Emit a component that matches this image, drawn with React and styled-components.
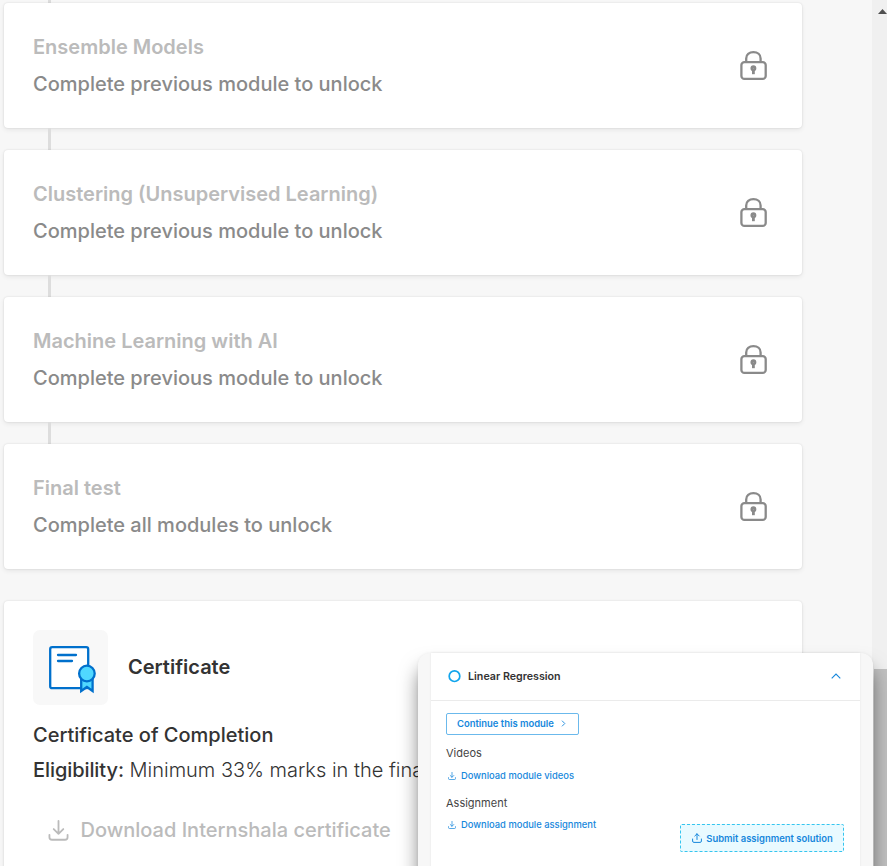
import React from "react";
import styled, { createGlobalStyle } from "styled-components";

const GlobalStyle = createGlobalStyle`
  * { box-sizing: border-box; }
  html, body { margin: 0; background: #f7f7f7; overflow: hidden; }
  body { font-family: Inter, "Open Sans", sans-serif; }
  svg { display: block; flex: none; }
  h2, h3, p { margin: 0; }
`;

const Page = styled.div`
  position: relative;
  display: flex;
  width: 887px;
  height: 866px;
  overflow: hidden;
  background: #f7f7f7;
`;

const Content = styled.main`
  width: 872px;
  padding-left: 4px;
`;

const Scrollbar = styled.div`
  display: flex;
  flex-direction: column;
  width: 15px;
  height: 866px;
  background: #f0f0f0;
`;

const ScrollArrow = styled.div`
  height: 669px;
  flex: none;
  padding: 9px 0 0 6px;
`;

const ScrollThumb = styled.div`
  flex: 1;
  margin-left: 2px;
  background: #c1c1c1;
`;

const Connector = styled.div`
  width: 3px;
  height: ${({ $height }) => $height}px;
  margin-left: 44px;
  background: #dddddd;
`;

const Card = styled.section`
  width: 798px;
  background: #fff;
  border-radius: 4px;
  box-shadow: 0 0 2px rgba(0, 0, 0, 0.12), 0 2px 5px rgba(0, 0, 0, 0.07);
`;

const ModuleCard = styled(Card)`
  display: flex;
  align-items: center;
  justify-content: space-between;
  height: 125px;
  padding: 0 34px 0 29px;
`;

const ModuleTitle = styled.h3`
  color: #bbb;
  font-size: 20px;
  font-weight: 600;
  line-height: 28px;
`;

const ModuleNote = styled.p`
  margin-top: 9px;
  color: #8a8a8a;
  font-size: 20px;
  font-weight: 500;
  line-height: 28px;
  white-space: nowrap;
`;

const CertificateCard = styled(Card)`
  height: 300px;
  margin-top: 32px;
  padding: 29px;
`;

const CertificateHeader = styled.div`
  display: flex;
  align-items: center;
  gap: 20px;
`;

const CertificateIconBox = styled.div`
  width: 75px;
  height: 75px;
  border-radius: 7px;
  background: #f8f8f8;
`;

const CertificateTitle = styled.h2`
  padding-bottom: 2px;
  color: #333;
  font-size: 20px;
  font-weight: 600;
  line-height: 28px;
`;

const CertificateText = styled.p`
  margin-top: ${({ $gap }) => $gap}px;
  color: #333;
  font-size: 20px;
  font-weight: ${({ $weight }) => $weight};
  line-height: 28px;
  white-space: nowrap;
`;

const Strong = styled.span`
  font-weight: 500;
  letter-spacing: -0.08px;
`;

const DisabledDownload = styled.div`
  display: flex;
  align-items: center;
  gap: 12px;
  margin: 32px 0 0 14.5px;
  color: #bbb;
  font-size: 20px;
  font-weight: 500;
  line-height: 28px;
`;

const Popup = styled.aside`
  position: absolute;
  left: 418px;
  top: 653px;
  width: 455px;
  height: 270px;
  padding: 0 13px;
  border-radius: 12px;
  background: #f7f7f7;
  box-shadow: 0 14px 20px -2px rgba(0, 0, 0, 0.55), 0 0 3px rgba(0, 0, 0, 0.06);
`;

const PopupPanel = styled.div`
  height: 270px;
  background: #fff;
  box-shadow: 0 0 2px rgba(0, 0, 0, 0.08);
`;

const PopupHeader = styled.header`
  display: flex;
  align-items: center;
  height: 48px;
  padding: 0 19px 1px 17px;
  border-bottom: 1px solid #ebebeb;
`;

const PopupTitle = styled.h3`
  flex: 1;
  margin-left: 7px;
  padding-top: 2px;
  color: #333;
  font-size: 10.7px;
  font-weight: 600;
  line-height: 16px;
`;

const PopupBody = styled.div`
  display: flex;
  flex-direction: column;
  align-items: flex-start;
  padding: 12px 16px 0 15px;
`;

const ContinueButton = styled.button`
  display: flex;
  align-items: center;
  gap: 7px;
  width: 133px;
  height: 22px;
  padding: 0 0 1px 10px;
  border: 1px solid #6bb9ec;
  border-radius: 2px;
  background: #fff;
  color: #1687dc;
  font: 600 9.45px Inter, sans-serif;
  white-space: nowrap;
`;

const SectionLabel = styled.p`
  margin-top: ${({ $gap }) => $gap}px;
  color: #444;
  font-size: 11px;
  line-height: 16px;
`;

const DownloadLink = styled.a`
  display: flex;
  align-items: center;
  gap: 5px;
  margin: ${({ $gap }) => $gap}px 0 0 2px;
  color: #1687dc;
  font-size: 9.4px;
  font-weight: 500;
  line-height: 14px;
`;

const SubmitButton = styled.button`
  display: flex;
  align-items: center;
  justify-content: center;
  align-self: flex-end;
  gap: 4px;
  width: 164px;
  height: 28px;
  margin-top: -8px;
  padding: 0 0 0 1px;
  border: 1px dashed #35c5ef;
  border-radius: 2px;
  background: #e9faff;
  color: #1687dc;
  font: 600 9.45px Inter, sans-serif;
  white-space: nowrap;
`;

const LockIcon = () => (
  <svg width="28" height="30" viewBox="0.3 0.6 28 30" fill="none" stroke="#8a8a8a">
    <rect x="1.7" y="11.7" width="24.3" height="16.8" rx="3" strokeWidth="2.3" />
    <path d="M6.5 11V8C6.5 4.4 9.4 1.8 13.7 1.8s7.2 2.6 7.2 6.2V11" strokeWidth="2.3" />
    <circle cx="13.7" cy="17.8" r="1.6" strokeWidth="2.7" />
    <path d="M13.7 19.5v4.3" strokeWidth="2.8" />
  </svg>
);

const CertificateIcon = () => (
  <svg width="75" height="75" viewBox="0 0 75 75" stroke="#0070cc" strokeWidth="2.3" strokeLinecap="round">
    <rect x="17.2" y="17.2" width="38" height="41" rx="2" fill="#fff" />
    <path d="M25 25h18M25 31h14" fill="none" />
    <path d="M48.2 48v13l5.7-4 5.7 4V48z" fill="#50d8ff" />
    <circle cx="53.9" cy="43.5" r="7.8" fill="#50d8ff" />
  </svg>
);

const DownloadIcon = ({ size, strokeWidth }) => (
  <svg width={size} height={size} viewBox="0 0 22 22" fill="none" stroke="currentColor" strokeWidth={strokeWidth} strokeLinecap="round" strokeLinejoin="round">
    <path d="M11 1v13.5M6 9.5l5 5 5-5M1.5 15.5V18q0 2.7 2.7 2.7h13.6q2.7 0 2.7-2.7v-2.5" />
  </svg>
);

const UploadIcon = () => (
  <svg width="10" height="10" viewBox="0 0 10 10" fill="none" stroke="currentColor" strokeLinecap="round" strokeLinejoin="round">
    <path d="M5 6.5V.8M2.8 3L5 .8 7.2 3M.6 6v2q0 1.4 1.3 1.4h6.2Q9.4 9.4 9.4 8V6" />
  </svg>
);

const modules = [
  { title: "Ensemble Models", note: "Complete previous module to unlock" },
  { title: "Clustering (Unsupervised Learning)", note: "Complete previous module to unlock" },
  { title: "Machine Learning with AI", note: "Complete previous module to unlock" },
  { title: "Final test", note: "Complete all modules to unlock" },
];

export default function App() {
  return (
    <>
      <GlobalStyle />
      <Page>
        <Content>
          {modules.map((module, index) => (
            <React.Fragment key={module.title}>
              <Connector $height={index === 0 ? 3 : 22} />
              <ModuleCard>
                <div>
                  <ModuleTitle>{module.title}</ModuleTitle>
                  <ModuleNote>{module.note}</ModuleNote>
                </div>
                <LockIcon />
              </ModuleCard>
            </React.Fragment>
          ))}
          <CertificateCard>
            <CertificateHeader>
              <CertificateIconBox><CertificateIcon /></CertificateIconBox>
              <CertificateTitle>Certificate</CertificateTitle>
            </CertificateHeader>
            <CertificateText $gap={16} $weight={500}>Certificate of Completion</CertificateText>
            <CertificateText $gap={7} $weight={300}>
              <Strong>Eligibility:</Strong> Minimum 33% marks in the fina
            </CertificateText>
            <DisabledDownload>
              <DownloadIcon size={21} strokeWidth={1.9} />
              Download Internshala certificate
            </DisabledDownload>
          </CertificateCard>
        </Content>
        <Scrollbar>
          <ScrollArrow>
            <svg width="9" height="5" viewBox="0 0 9 5"><path d="M0 5L4.5 0 9 5z" fill="#505050" /></svg>
          </ScrollArrow>
          <ScrollThumb />
        </Scrollbar>
        <Popup>
          <PopupPanel>
            <PopupHeader>
              <svg width="13" height="13" viewBox="0 0 13 13"><circle cx="6.5" cy="6.2" r="5.3" fill="none" stroke="#12a5ec" strokeWidth="1.7" /></svg>
              <PopupTitle>Linear Regression</PopupTitle>
              <svg width="10" height="6" viewBox="0 0 10 6"><path d="M.7 5.3L5 1l4.3 4.3" fill="none" stroke="#1687dc" strokeWidth="1.1" /></svg>
            </PopupHeader>
            <PopupBody>
              <ContinueButton>
                Continue this module
                <svg width="5" height="7" viewBox="0 0 5 7"><path d="M1 .7l2.8 2.8L1 6.3" fill="none" stroke="currentColor" strokeWidth=".9" /></svg>
              </ContinueButton>
              <SectionLabel $gap={10}>Videos</SectionLabel>
              <DownloadLink $gap={8}><DownloadIcon size={8} strokeWidth={2} />Download module videos</DownloadLink>
              <SectionLabel $gap={12}>Assignment</SectionLabel>
              <DownloadLink $gap={7}><DownloadIcon size={8} strokeWidth={2} />Download module assignment</DownloadLink>
              <SubmitButton><UploadIcon />Submit assignment solution</SubmitButton>
            </PopupBody>
          </PopupPanel>
        </Popup>
      </Page>
    </>
  );
}
